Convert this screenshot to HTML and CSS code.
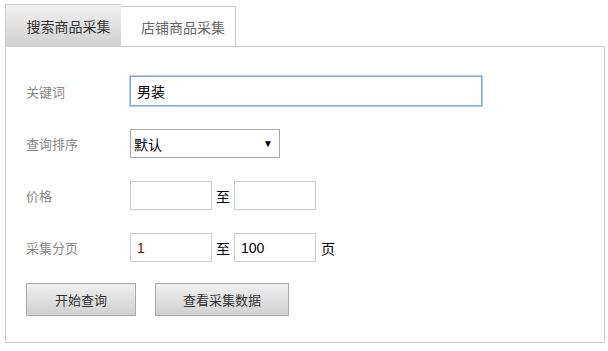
FILE: index.html
```html
<!DOCTYPE html>
<html>
<head>
  <meta charset="utf-8">
  <title>商品采集</title>
  <link rel="stylesheet" href="styles.css">
</head>
<body>

  <div class="wrap">
    <div class="tabs">
      <div class="tab active">搜索商品采集</div>
      <div class="tab">店铺商品采集</div>
    </div>

    <div class="panel">
      <div class="row first">
        <label class="label">关键词</label>
        <input class="field wide focus" type="text" value="男装">
      </div>
      <div class="row">
        <label class="label">查询排序</label>
        <div class="select">
          <span>默认</span>
          <span class="arrow">▼</span>
        </div>
      </div>
      <div class="row">
        <label class="label">价格</label>
        <input class="field short" type="text">
        <span class="to">至</span>
        <input class="field short" type="text">
      </div>
      <div class="row last">
        <label class="label">采集分页</label>
        <input class="field short red" type="text" value="1">
        <span class="to">至</span>
        <input class="field short" type="text" value="100">
        <span class="unit">页</span>
      </div>
      <div class="actions">
        <button class="btn start">开始查询</button>
        <button class="btn view">查看采集数据</button>
      </div>
    </div>
  </div>

</body>
</html>
```

FILE: styles.css
```css
* { box-sizing: border-box; margin: 0; padding: 0; }

body {
  font-family: "Liberation Sans", "Noto Sans CJK SC", sans-serif;
  background: #fff;
  color: #000;
}

.wrap {
  padding: 4px 0 0 5px;
  width: 605px;
}

.tabs {
  display: flex;
  align-items: flex-end;
  height: 42px;
}

.tab {
  width: 115px;
  height: 40px;
  border: 1px solid #ccc;
  border-bottom: none;
  border-left: none;
  background: #fff;
  color: #666;
  font-size: 14px;
  line-height: 42px;
  text-align: center;
  padding-left: 10px;
}

.tab.active {
  width: 116px;
  height: 42px;
  border-left: 1px solid #ccc;
  border-right: none;
  line-height: 44px;
  color: #333;
  background: linear-gradient(#f2f2f2, #d0d0d0);
}

.panel {
  border: 1px solid #ccc;
  padding: 29px 20px 0 20px;
  height: 297px;
}

.row {
  display: flex;
  align-items: center;
  height: 29px;
  margin-bottom: 23px;
  font-size: 14px;
}

.row.first { height: 30px; }
.row.last { margin-bottom: 21px; }

.label {
  width: 104px;
  font-size: 13px;
  color: #888;
}

.field {
  height: 29px;
  border: 1px solid #ccc;
  padding: 0 6px;
  font-family: "Liberation Sans", "Noto Sans CJK SC", sans-serif;
  font-size: 14px;
  color: #000;
  outline: none;
}

.wide {
  width: 352px;
  height: 30px;
}

.focus {
  border: 1px solid #7da6ea;
  box-shadow: 0 0 0 1px #b5cdf5;
}

.short { width: 82px; }

.red { color: #8b0000; }

.to { margin: 0 4px; }

.unit { margin-left: 5px; }

.select {
  width: 150px;
  height: 29px;
  border: 1px solid #aaa;
  display: flex;
  align-items: center;
  justify-content: space-between;
  padding: 0 6px 0 3px;
}

.arrow {
  font-size: 10px;
}

.actions {
  display: flex;
  gap: 19px;
}

.btn {
  height: 33px;
  border: 1px solid #aaa;
  background: linear-gradient(#f0f0f0, #d0d0d0);
  color: #333;
  font-family: "Liberation Sans", "Noto Sans CJK SC", sans-serif;
  font-size: 13px;
}

.start { width: 110px; }
.view { width: 134px; }
```
